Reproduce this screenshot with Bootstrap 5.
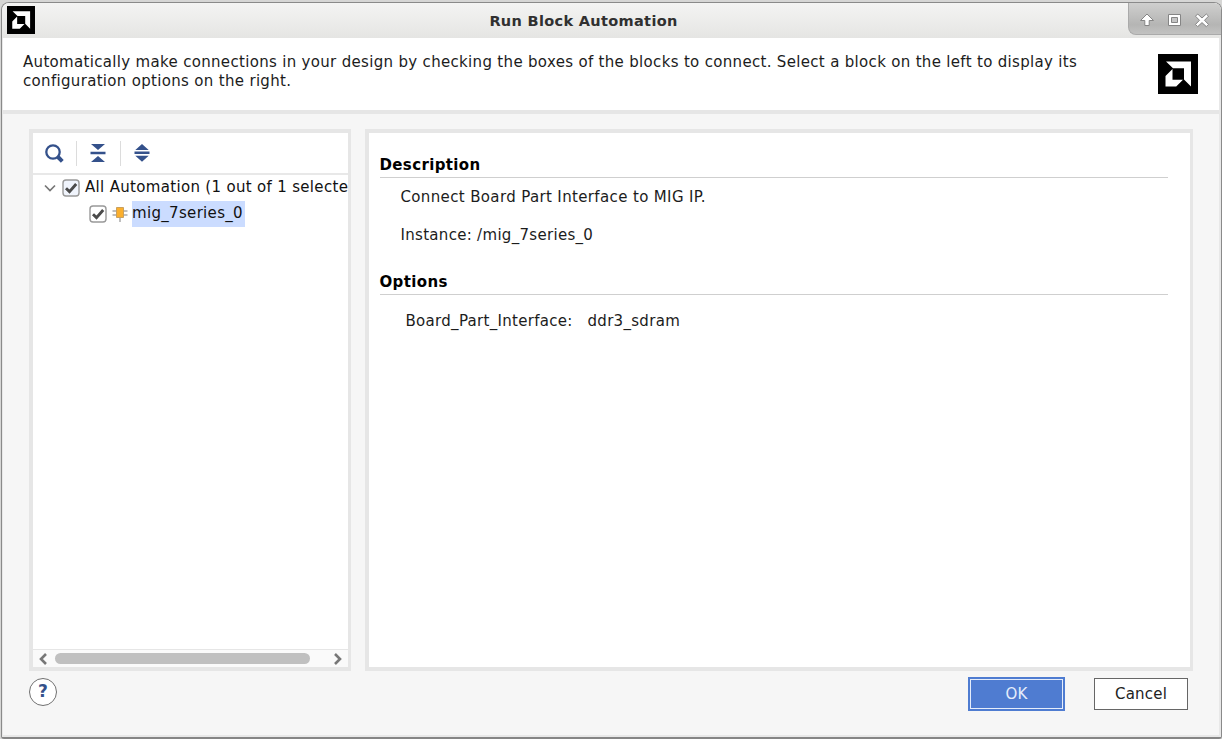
<!DOCTYPE html>
<html lang="en">
<head>
<meta charset="utf-8">
<title>Run Block Automation</title>
<link href="https://cdn.jsdelivr.net/npm/bootstrap@5.3.0/dist/css/bootstrap.min.css" rel="stylesheet">
<style>
html,body{height:739px;overflow:hidden}
body{background:#d6d6d5;font:15px/19px "DejaVu Sans",sans-serif;letter-spacing:.32px;color:#1c1c1c;padding:2px 0 0 1px}
svg{display:block;flex:none}
.window{width:1221px;height:737px;border:1px solid #8a8a8a;border-bottom:2px solid #858585;border-radius:8px 8px 3px 3px;background:#f6f6f6;overflow:hidden}
.titlebar{height:35px;background:linear-gradient(#f4f4f3,#e5e5e3);flex:none}
.title-text{font-size:14.5px;font-weight:700;letter-spacing:.33px;color:#303030;margin-right:56px;padding-top:1px}
.app-icon{left:5px;top:3px}
.controls{right:0;top:0;width:93px;height:32px;background:linear-gradient(#cfcfce,#b5b5b4 70%,#c2c2c1);border:1px solid #aaa;border-top:0;border-right:0;border-bottom-left-radius:8px}
.frame{border:solid #e8e8e8;border-width:0 2px 2px 1px;min-height:0}
.intro{height:76px;border-bottom:4px solid #e6e6e6;background:#fff;padding:15px 21px 0 20px;flex:none}
.panels{padding:15px 26px 0 26px;gap:13px;height:557px;flex:none}
.pane{border:4px solid #e6e6e6;border-right-width:3px;background:#fff;height:542px}
.left-pane{width:322px;margin-right:1px}
.tools{height:42px;border-bottom:2px solid #e8e8e8;padding-left:11px;flex:none}
.sep{width:1px;height:25px;background:#dcdcdc}
.tree-row{height:26px;white-space:nowrap;overflow:hidden;color:#111}
.selected-node{background:#cbdcff;height:26px;line-height:25px;width:113px}
.scroll{height:18px;border-top:1px solid #e6e6e6;background:#fafafa;padding:0 2px 0 4px}
.thumb{width:255px;height:11px;border-radius:6px;background:#c0c0c0;margin-top:-1px}
.right-pane{padding:22px 22px 0 10.500px}
.section-title{font-weight:700;font-size:15px;letter-spacing:.37px;line-height:20px;height:23px;border-bottom:1px solid #cfcfcf;color:#000;margin:0}
.help{width:28px;height:28px;border:1px solid #707070;border-radius:50%;background:#fff;color:#34518b;font-weight:700;font-size:17px;letter-spacing:0;margin-left:26px;margin-top:7px}
.dlg-btn{border-radius:0;font-size:15px;line-height:19px;padding:0;letter-spacing:.2px}
.ok-btn,.ok-btn:hover{width:97px;height:34px;background:#4f7cd1;color:#e5edfb;border:2px solid #4f7cd1;box-shadow:inset 0 0 0 1px #e5edfb;margin-top:6px}
.cancel-btn{width:94px;height:32px;background:#fff;border:1px solid #666;color:#222;margin:7px 31px 0 29px}
</style>
</head>
<body>
<svg width="0" height="0" class="position-absolute"><defs>
<symbol id="logo" viewBox="0 0 40 40"><path fill="#000" d="M0 0h40v40H0z"/><path fill="#fff" d="M8 7.500h25v25l-7-7V14.300H15zM7.500 22l7-7v10.800h10.500l-6.800 6.800H7.500z"/></symbol>
<symbol id="check" viewBox="0 0 18 18"><rect x="1" y="1" width="16" height="16" rx="3" fill="inherit" stroke="#999" stroke-width="1.400"/><path d="M4 9.200l3.500 3.400 6.700-7.600" fill="none" stroke="#4b4b4b" stroke-width="2.900"/></symbol>
</defs></svg>
<div class="window d-flex flex-column">
  <div class="titlebar position-relative d-flex justify-content-center align-items-center">
    <svg class="app-icon position-absolute" width="28" height="28"><use href="#logo"/></svg>
    <span class="title-text">Run Block Automation</span>
    <div class="controls position-absolute">
      <svg width="92" height="32" fill="#fff" stroke="#858585" stroke-width="1" stroke-linejoin="round"><path d="M18 11l6.500 6.500h-4.300v5h-4.400v-5h-4.300z"/><path d="M39.500 11.500h12v11h-12z"/><path fill="#c5c5c5" d="M42.500 14.500h6v5h-6z"/><path d="M66.500 13.200l2.200-2.200 4.300 4 4.300-4 2.200 2.200-4 4.100 4 4.100-2.200 2.200-4.300-4-4.300 4-2.200-2.200 4-4.100z"/></svg>
    </div>
  </div>
  <div class="frame flex-grow-1 d-flex flex-column">
    <div class="intro d-flex justify-content-between">
      <div class="text-nowrap">Automatically make connections in your design by checking the boxes of the blocks to connect. Select a block on the left to display its<br>configuration options on the right.</div>
      <svg width="40" height="40" style="margin-top:1px"><use href="#logo"/></svg>
    </div>
    <div class="panels d-flex">
      <div class="pane left-pane d-flex flex-column">
        <div class="tools d-flex align-items-center">
          <svg width="20" height="20" fill="none" stroke="#34518b"><circle cx="9" cy="9" r="6.700" stroke-width="2.300"/><path stroke-width="4" d="M14 14l4.300 4.300"/></svg>
          <div class="sep" style="margin-left:12px"></div>
          <svg style="margin-left:12px" width="18" height="20" fill="#34518b"><path d="M2 1h14l-7 6zM1.500 8.800h15v2.400h-15zM2 19h14l-7-6z"/></svg>
          <div class="sep" style="margin-left:13px"></div>
          <svg style="margin-left:12px" width="18" height="20" fill="#34518b"><path d="M9 1l6.700 6H2.300zM1.500 8.500h15v2.500h-15zM2.300 12.800h13.400L9 18.800z"/></svg>
        </div>
        <div class="tree-row d-flex align-items-center">
          <svg style="margin-left:10px" width="14" height="12" fill="none" stroke="#777" stroke-width="1.700"><path d="M2 3.500l5 5 5-5"/></svg>
          <svg style="margin:0 5px 0 5px" width="18" height="18" fill="#f0f4fc"><use href="#check"/></svg>
          <span style="letter-spacing:.32px;padding-bottom:1px">All Automation (1 out of 1 selecte</span>
        </div>
        <div class="tree-row d-flex align-items-center">
          <svg style="margin-left:56px" width="18" height="18" fill="#fff"><use href="#check"/></svg>
          <svg style="margin:0 4px 0 5px" width="16" height="18"><path d="M.5 6h15M.5 10h15M8 12v5" stroke="#aaa" stroke-width="1.500"/><path fill="#fbaf2d" stroke="#c9a05e" d="M4.500 2.500h7v10h-7z"/></svg>
          <span class="selected-node">mig_7series_0</span>
        </div>
        <div class="scroll mt-auto d-flex align-items-center">
          <svg width="12" height="12" fill="none" stroke="#777" stroke-width="2.600"><path d="M9 1L4 6l5 5"/></svg>
          <div class="thumb" style="margin-left:6px"></div>
          <svg class="ms-auto" width="12" height="12" fill="none" stroke="#777" stroke-width="2.600" style="margin-right:2px"><path d="M3 1l5 5-5 5"/></svg>
        </div>
      </div>
      <div class="pane right-pane flex-grow-1">
        <h2 class="section-title">Description</h2>
        <p class="m-0" style="padding:10px 0 0 21px;letter-spacing:.36px">Connect Board Part Interface to MIG IP.</p>
        <p class="m-0" style="padding:19px 0 0 21px;letter-spacing:.3px">Instance: /mig_7series_0</p>
        <h2 class="section-title" style="margin-top:27px">Options</h2>
        <div class="d-flex" style="padding:17px 0 0 26px;letter-spacing:.3px"><span style="width:182px">Board_Part_Interface:</span><span>ddr3_sdram</span></div>
      </div>
    </div>
    <div class="d-flex align-items-start">
      <button class="help btn p-0 d-flex align-items-center justify-content-center">?</button>
      <button class="btn dlg-btn ok-btn ms-auto">OK</button>
      <button class="btn dlg-btn cancel-btn">Cancel</button>
    </div>
  </div>
</div>
<script src="https://cdn.jsdelivr.net/npm/bootstrap@5.3.0/dist/js/bootstrap.bundle.min.js"></script>
</body>
</html>
